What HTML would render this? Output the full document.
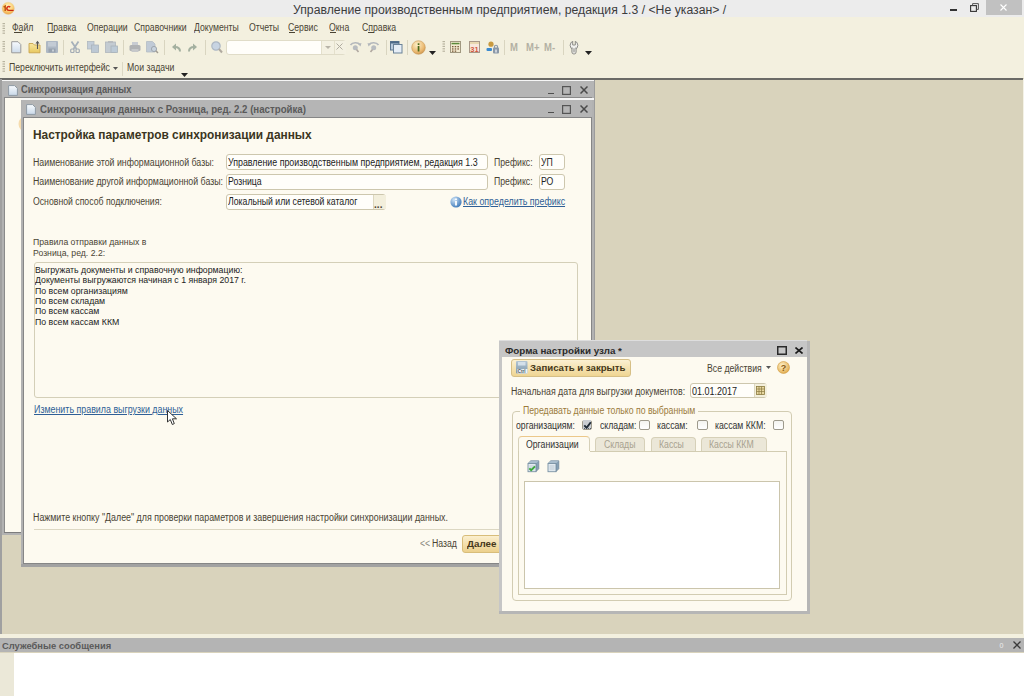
<!DOCTYPE html>
<html><head><meta charset="utf-8"><style>
html,body{margin:0;padding:0;width:1024px;height:696px;overflow:hidden;background:#d9d3bc}
body>div,body>svg{position:absolute}
.t{white-space:nowrap;line-height:1;font-family:"Liberation Sans",sans-serif;transform-origin:0 0}
</style></head><body>
<div style="left:0px;top:0px;width:1024px;height:696px;background:#d9d3bc"></div>
<div style="left:0px;top:0px;width:1024px;height:17px;background:#ececec"></div>
<div style="left:0px;top:17px;width:1024px;height:61px;background:#f3f0df"></div>
<div style="left:0px;top:78.4px;width:1022.5px;height:1.4px;background:#6a6a66"></div>
<div style="left:1022.5px;top:79px;width:1.5px;height:555px;background:#f4f2e6"></div>
<div class="t" style="left:292.6px;top:4px;font-size:12px;font-weight:normal;color:#3c3c3c;transform:scaleX(1.02);">Управление производственным предприятием, редакция 1.3 / &lt;Не указан&gt; /</div>
<svg style="left:0px;top:0px" width="18" height="17"><defs><radialGradient id="lg" cx="50%" cy="35%" r="65%"><stop offset="0" stop-color="#fff8c8"/><stop offset=".55" stop-color="#fbd27a"/><stop offset="1" stop-color="#eca048"/></radialGradient></defs><circle cx="8.2" cy="8.4" r="6.2" fill="url(#lg)" stroke="#e9d9a8" stroke-width=".5"/><path d="M3.6 7.2L5.2 6.2V11" fill="none" stroke="#c0580c" stroke-width="1.5"/><path d="M10.2 7.2A1.9 1.9 0 1 0 8.6 10.3" fill="none" stroke="#d8301a" stroke-width="1.6"/><path d="M8.2 10.4H13.6" stroke="#c82a10" stroke-width="1.2"/></svg>
<div style="left:950.3px;top:9.2px;width:6.6px;height:1.4px;background:#333"></div>
<svg style="left:970px;top:3px" width="9" height="9"><rect x="0.6" y="2.6" width="5.8" height="5.8" fill="none" stroke="#333" stroke-width="1.1"/><path d="M2.6 2.5V0.6H8.4V6.4H6.5" fill="none" stroke="#555" stroke-width="1"/></svg>
<div style="left:986px;top:0px;width:36px;height:15px;background:#c1c1c1"></div>
<svg style="left:1000.3px;top:4.3px" width="8" height="7"><path d="M0.5 0.5L6.5 6.5M6.5 0.5L0.5 6.5" stroke="#fff" stroke-width="1.1"/></svg>
<svg style="left:2px;top:23px" width="4" height="12"><rect x="0.5" y="0.0" width="2.5" height="1.2" fill="#b8b4a0"/><rect x="0.5" y="2.4" width="2.5" height="1.2" fill="#b8b4a0"/><rect x="0.5" y="4.8" width="2.5" height="1.2" fill="#b8b4a0"/><rect x="0.5" y="7.199999999999999" width="2.5" height="1.2" fill="#b8b4a0"/><rect x="0.5" y="9.6" width="2.5" height="1.2" fill="#b8b4a0"/></svg>
<svg style="left:2px;top:41px" width="4" height="12"><rect x="0.5" y="0.0" width="2.5" height="1.2" fill="#b8b4a0"/><rect x="0.5" y="2.4" width="2.5" height="1.2" fill="#b8b4a0"/><rect x="0.5" y="4.8" width="2.5" height="1.2" fill="#b8b4a0"/><rect x="0.5" y="7.199999999999999" width="2.5" height="1.2" fill="#b8b4a0"/><rect x="0.5" y="9.6" width="2.5" height="1.2" fill="#b8b4a0"/></svg>
<svg style="left:2px;top:61px" width="4" height="12"><rect x="0.5" y="0.0" width="2.5" height="1.2" fill="#b8b4a0"/><rect x="0.5" y="2.4" width="2.5" height="1.2" fill="#b8b4a0"/><rect x="0.5" y="4.8" width="2.5" height="1.2" fill="#b8b4a0"/><rect x="0.5" y="7.199999999999999" width="2.5" height="1.2" fill="#b8b4a0"/><rect x="0.5" y="9.6" width="2.5" height="1.2" fill="#b8b4a0"/></svg>
<svg style="left:442px;top:41px" width="4" height="12"><rect x="0.5" y="0.0" width="2.5" height="1.2" fill="#b8b4a0"/><rect x="0.5" y="2.4" width="2.5" height="1.2" fill="#b8b4a0"/><rect x="0.5" y="4.8" width="2.5" height="1.2" fill="#b8b4a0"/><rect x="0.5" y="7.199999999999999" width="2.5" height="1.2" fill="#b8b4a0"/><rect x="0.5" y="9.6" width="2.5" height="1.2" fill="#b8b4a0"/></svg>
<svg style="left:11px;top:41px" width="11" height="13"><defs><linearGradient id="nd" x1="0" y1="0" x2="0" y2="1"><stop offset="0" stop-color="#f7fafd"/><stop offset="1" stop-color="#cddbea"/></linearGradient></defs><path d="M.7 .7H7L9.8 3.5V11.8H.7Z" fill="url(#nd)" stroke="#9b9b9b" stroke-width="1"/></svg>
<svg style="left:28px;top:40px" width="13" height="14"><defs><linearGradient id="fo" x1="0" y1="0" x2="0" y2="1"><stop offset="0" stop-color="#f7e7a0"/><stop offset="1" stop-color="#e8c860"/></linearGradient></defs><path d="M1 3.5H5L6.5 5H12V12.8H1Z" fill="url(#fo)" stroke="#c9a54e" stroke-width=".9"/><path d="M9.5 9V2.5" stroke="#555" stroke-width="1.1"/><path d="M7.5 3.5L9.5 .8L11.5 3.5Z" fill="#555"/></svg>
<svg style="left:46px;top:41px" width="12" height="12"><rect x="0" y="0" width="12" height="12" rx="1" fill="#aeb8c4"/><rect x="2" y="1" width="8" height="4.5" fill="#c3cbd4"/><rect x="2.5" y="7.5" width="7" height="4" fill="#98a2ae"/><rect x="6" y="8.5" width="2" height="2" fill="#c8cfd6"/></svg>
<div style="left:63px;top:40px;width:1px;height:15px;background:#d9d5c0"></div>
<svg style="left:70px;top:41px" width="10" height="12"><path d="M1.5 .5L6.5 8M8.5 .5L3.5 8" stroke="#a6b0ba" stroke-width="1.8"/><rect x="0.7" y="8" width="3.3" height="3.5" rx="1" fill="none" stroke="#a3acb4" stroke-width="1.2"/><rect x="6" y="8" width="3.3" height="3.5" rx="1" fill="none" stroke="#a3acb4" stroke-width="1.2"/></svg>
<svg style="left:87px;top:41px" width="12" height="12"><rect x=".5" y=".5" width="6.5" height="7.5" fill="#c3cdd8" stroke="#b0b8c0" stroke-width=".8"/><rect x="4.5" y="4" width="7" height="7.5" fill="#bcc8d4" stroke="#aab3bc" stroke-width=".8"/></svg>
<svg style="left:105px;top:41px" width="13" height="12"><rect x=".5" y="1" width="10" height="10.5" fill="#c3cbd2" stroke="#b0b6bc" stroke-width=".8"/><rect x="3" y="0" width="5" height="2" fill="#b8bcc0"/><rect x="6" y="5" width="6.5" height="6.5" fill="#bccad6" stroke="#a8b2ba" stroke-width=".8"/></svg>
<div style="left:122.5px;top:40px;width:1px;height:15px;background:#d9d5c0"></div>
<svg style="left:129px;top:41px" width="12" height="12"><rect x="3" y="1" width="6" height="4" fill="#c8ccd2"/><rect x=".5" y="4" width="11" height="6" rx="1.5" fill="#b0b2b4"/><rect x="2.5" y="8" width="7" height="3" fill="#c6c8ca"/></svg>
<svg style="left:146px;top:41px" width="13" height="13"><path d="M.5 .5H6.5L9 3V11H.5Z" fill="#c0cad6" stroke="#b4bcc4" stroke-width=".8"/><circle cx="8" cy="8" r="2.6" fill="#c8d2dc" stroke="#9ea6ae" stroke-width="1"/><path d="M9.8 9.8L12 12" stroke="#a09a90" stroke-width="1.5"/></svg>
<div style="left:163.5px;top:40px;width:1px;height:15px;background:#d9d5c0"></div>
<svg style="left:172px;top:43px" width="9" height="9"><path d="M8 8.5C8 5 6 4 3 4" fill="none" stroke="#a4b0a0" stroke-width="2"/><path d="M0 4L4 .5V7.5Z" fill="#a4b0a0"/></svg>
<svg style="left:188px;top:43px" width="9" height="9"><path d="M1 8.5C1 5 3 4 6 4" fill="none" stroke="#a4b0a0" stroke-width="2"/><path d="M9 4L5 .5V7.5Z" fill="#a4b0a0"/></svg>
<div style="left:204.5px;top:40px;width:1px;height:15px;background:#d9d5c0"></div>
<svg style="left:211px;top:41px" width="12" height="13"><circle cx="5" cy="5" r="4.2" fill="#c8d4e2" stroke="#aeb8c4" stroke-width="1.2"/><path d="M8 8L11 11.5" stroke="#b0aaa0" stroke-width="2"/></svg>
<div style="left:226px;top:39.5px;width:119.5px;height:15px;background:#fffefa;border:1px solid #e0dcc8;border-radius:3px;box-sizing:border-box"></div>
<div style="left:321px;top:40.5px;width:24px;height:13px;background:#f4f1e2;border-left:1px solid #e4e0cc"></div>
<div style="left:333.5px;top:40.5px;width:1px;height:13px;background:#e4e0cc"></div>
<svg style="left:325px;top:46px" width="6" height="3"><path d="M0 0H6L3 3Z" fill="#b8b4a8"/></svg>
<svg style="left:336px;top:43px" width="7" height="7"><path d="M.5 .5L6.5 6.5M6.5 .5L.5 6.5" stroke="#b0aca0" stroke-width="1"/></svg>
<svg style="left:349px;top:41px" width="13" height="12"><g ><path d="M1.5 4C3.5 1 9 1 11 3.5" fill="none" stroke="#b4b8bc" stroke-width="1.6"/><path d="M12.5 2L11.5 5.5L9 3Z" fill="#b4b8bc"/><circle cx="6.3" cy="6.8" r="2.5" fill="#b8bcc0"/><path d="M7.5 8.5L9.5 11" stroke="#b0a8a0" stroke-width="1.6"/></g></svg>
<svg style="left:367px;top:41px" width="13" height="12"><g transform="translate(13,0) scale(-1,1)"><path d="M1.5 4C3.5 1 9 1 11 3.5" fill="none" stroke="#b4b8bc" stroke-width="1.6"/><path d="M12.5 2L11.5 5.5L9 3Z" fill="#b4b8bc"/><circle cx="6.3" cy="6.8" r="2.5" fill="#b8bcc0"/><path d="M7.5 8.5L9.5 11" stroke="#b0a8a0" stroke-width="1.6"/></g></svg>
<div style="left:385.5px;top:40px;width:1px;height:15px;background:#d9d5c0"></div>
<svg style="left:390px;top:41px" width="13" height="13"><rect x=".5" y=".5" width="8.5" height="8.5" fill="#b8cadc" stroke="#5c7690" stroke-width="1"/><rect x=".5" y=".5" width="8.5" height="2" fill="#4c6a88"/><rect x="3.5" y="3.5" width="8.5" height="8.5" fill="#e6eef6" stroke="#6a8298" stroke-width="1"/></svg>
<div style="left:406.5px;top:40px;width:1px;height:15px;background:#d9d5c0"></div>
<svg style="left:411px;top:40px" width="15" height="15"><defs><radialGradient id="inf" cx="40%" cy="30%" r="75%"><stop offset="0" stop-color="#fdf0c8"/><stop offset=".7" stop-color="#eab870"/><stop offset="1" stop-color="#c8904a"/></radialGradient></defs><circle cx="7.5" cy="7.5" r="6.8" fill="url(#inf)" stroke="#c99a58" stroke-width=".6"/><rect x="6.7" y="6" width="1.7" height="5.5" fill="#4a6a1a"/><rect x="6.7" y="3.3" width="1.7" height="1.7" fill="#4a6a1a"/></svg>
<svg style="left:429px;top:51px" width="7" height="4"><path d="M0 0H7L3.5 4Z" fill="#222"/></svg>
<svg style="left:450px;top:41px" width="11" height="12"><rect x=".5" y=".5" width="10" height="11" fill="#f2ead0" stroke="#a09880" stroke-width="1"/><rect x="1.5" y="1.8" width="8" height="1.5" fill="#5a8a3a"/><g fill="#7a5a3a"><rect x="2" y="5" width="1.5" height="1.3"/><rect x="4.7" y="5" width="1.5" height="1.3"/><rect x="7.4" y="5" width="1.5" height="1.3"/><rect x="2" y="7.3" width="1.5" height="1.3"/><rect x="4.7" y="7.3" width="1.5" height="1.3"/><rect x="7.4" y="7.3" width="1.5" height="1.3"/><rect x="2" y="9.5" width="1.5" height="1.3"/><rect x="4.7" y="9.5" width="1.5" height="1.3"/></g></svg>
<svg style="left:469px;top:41px" width="11" height="12"><rect x=".5" y=".5" width="10" height="11" fill="#f8e8dc" stroke="#a89888" stroke-width="1"/><rect x="1" y="1" width="9" height="2" fill="#e8d8b0"/><text x="1.3" y="10.5" font-size="7.5" font-family="Liberation Sans" font-weight="bold" fill="#d05a40">31</text></svg>
<svg style="left:486px;top:41px" width="14" height="13"><circle cx="5" cy="3.2" r="2.6" fill="#c89a40"/><rect x="0.5" y="7" width="5.5" height="3" rx="1" fill="#3a8ad0"/><rect x="7" y="6.5" width="6" height="6" rx="1" fill="#8a98a8"/><path d="M8.5 7V5.5C8.5 3.8 11.5 3.8 11.5 5.5V7" fill="none" stroke="#8a98a8" stroke-width="1.2"/><rect x="9.3" y="8.5" width="1.4" height="3" fill="#e8ecf0"/></svg>
<div style="left:503.5px;top:40px;width:1px;height:15px;background:#d9d5c0"></div>
<div class="t" style="left:509.9px;top:43px;font-size:10px;font-weight:bold;color:#b4b0a4;transform:scaleX(0.95);">M</div>
<div class="t" style="left:525.5px;top:43px;font-size:10px;font-weight:bold;color:#b4b0a4;transform:scaleX(0.95);">M+</div>
<div class="t" style="left:544.3px;top:43px;font-size:10px;font-weight:bold;color:#b4b0a4;transform:scaleX(0.95);">M-</div>
<div style="left:562.5px;top:40px;width:1px;height:15px;background:#d9d5c0"></div>
<svg style="left:569px;top:40.5px" width="10" height="14"><circle cx="5" cy="4.3" r="3.9" fill="#f2f2ef" stroke="#8c8c88" stroke-width="1"/><rect x="2.9" y="6" width="4.2" height="7" rx="2" fill="#f2f2ef" stroke="#8c8c88" stroke-width="1"/><rect x="3.4" y="5" width="3.2" height="2" fill="#f2f2ef"/><path d="M3.7 0V4H6.3V0" fill="#f3f0df" stroke="#8c8c88" stroke-width="1"/><rect x="4.3" y="7.6" width="1.4" height="3.6" rx=".7" fill="none" stroke="#9a9a96" stroke-width=".8"/></svg>
<svg style="left:585px;top:51px" width="7" height="4"><path d="M0 0H7L3.5 4Z" fill="#222"/></svg>
<div class="t" style="left:12.3px;top:22.5px;font-size:10px;font-weight:normal;color:#4a4434;transform:scaleX(0.87);">Файл</div>
<div class="t" style="left:47.1px;top:22.5px;font-size:10px;font-weight:normal;color:#4a4434;transform:scaleX(0.87);">Правка</div>
<div class="t" style="left:86.9px;top:22.5px;font-size:10px;font-weight:normal;color:#4a4434;transform:scaleX(0.87);">Операции</div>
<div class="t" style="left:133.8px;top:22.5px;font-size:10px;font-weight:normal;color:#4a4434;transform:scaleX(0.87);">Справочники</div>
<div class="t" style="left:194.2px;top:22.5px;font-size:10px;font-weight:normal;color:#4a4434;transform:scaleX(0.87);">Документы</div>
<div class="t" style="left:248.6px;top:22.5px;font-size:10px;font-weight:normal;color:#4a4434;transform:scaleX(0.87);">Отчеты</div>
<div class="t" style="left:287.5px;top:22.5px;font-size:10px;font-weight:normal;color:#4a4434;transform:scaleX(0.87);">Сервис</div>
<div class="t" style="left:329.1px;top:22.5px;font-size:10px;font-weight:normal;color:#4a4434;transform:scaleX(0.87);">Окна</div>
<div class="t" style="left:362.0px;top:22.5px;font-size:10px;font-weight:normal;color:#4a4434;transform:scaleX(0.87);">Справка</div>
<div style="left:13.5px;top:32px;width:8px;height:1px;background:#4a4434"></div>
<div style="left:48px;top:32px;width:6px;height:1px;background:#4a4434"></div>
<div style="left:288.5px;top:32px;width:6px;height:1px;background:#4a4434"></div>
<div style="left:330px;top:32px;width:6px;height:1px;background:#4a4434"></div>
<div style="left:367.5px;top:32px;width:6px;height:1px;background:#4a4434"></div>
<div class="t" style="left:8.9px;top:63px;font-size:10px;font-weight:normal;color:#4a4434;transform:scaleX(0.87);">Переключить интерфейс</div>
<svg style="left:113px;top:67px" width="6" height="3"><path d="M0 0H5L2.5 3Z" fill="#555"/></svg>
<div style="left:121.5px;top:62px;width:1px;height:14px;background:#dcd8c4"></div>
<div class="t" style="left:127.1px;top:63px;font-size:10px;font-weight:normal;color:#4a4434;transform:scaleX(0.87);">Мои задачи</div>
<svg style="left:181px;top:73px" width="7" height="4"><path d="M0 0H7L3.5 4Z" fill="#222"/></svg>
<div style="left:0px;top:79.8px;width:595.3px;height:455px;background:#b2b2b2"></div>
<div style="left:594px;top:79.8px;width:1.3px;height:455px;background:#9c9c9c"></div>
<div style="left:1.6px;top:80px;width:592.5px;height:1px;background:#f6f6f6"></div>
<div style="left:1.6px;top:81px;width:592.5px;height:16.2px;background:#b5b5b5"></div>
<div style="left:3.8px;top:97.2px;width:588px;height:1px;background:#8a8a8a"></div>
<div style="left:3.8px;top:97.2px;width:1px;height:435px;background:#8a8a8a"></div>
<div style="left:3.8px;top:531.6px;width:588px;height:1px;background:#7c7c7c"></div>
<div style="left:4.6px;top:98.2px;width:587px;height:433.4px;background:#fdfaf0"></div>
<div class="t" style="left:20.6px;top:85.4px;font-size:10px;font-weight:bold;color:#5a5a5a;transform:scaleX(0.93);">Синхронизация данных</div>
<svg style="left:14.5px;top:115px" width="8" height="18"><circle cx="12" cy="9" r="8.5" fill="#f6dcae"/></svg>
<div style="left:21px;top:98.3px;width:574.3px;height:468.5px;background:#b2b2b2"></div>
<div style="left:594px;top:98.3px;width:1.3px;height:468.5px;background:#9c9c9c"></div>
<div style="left:21px;top:563.5px;width:574.3px;height:3.3px;background:#a2a2a2"></div>
<div style="left:21px;top:98.3px;width:573px;height:1.5px;background:#f6f6f6"></div>
<div style="left:22px;top:99.8px;width:570px;height:16.8px;background:#b5b5b5"></div>
<div style="left:22.5px;top:116.6px;width:569.5px;height:447px;background:#868686"></div>
<div style="left:23.5px;top:117.5px;width:567.8px;height:445.2px;background:#fdfaf0"></div>
<div class="t" style="left:40.0px;top:104.8px;font-size:10px;font-weight:bold;color:#5a5a5a;transform:scaleX(0.968);">Синхронизация данных с Розница, ред. 2.2 (настройка)</div>
<svg style="left:7.5px;top:84.5px" width="10" height="11"><defs><linearGradient id="dg7.5" x1="0" y1="0" x2="0" y2="1"><stop offset="0" stop-color="#f8fbfe"/><stop offset="1" stop-color="#c9d8e8"/></linearGradient></defs><path d="M.6 .6H6.6L9.4 3.4V10.4H.6Z" fill="url(#dg7.5)" stroke="#8f9aa4" stroke-width="1"/></svg>
<svg style="left:26px;top:104px" width="10" height="11"><defs><linearGradient id="dg26" x1="0" y1="0" x2="0" y2="1"><stop offset="0" stop-color="#f8fbfe"/><stop offset="1" stop-color="#c9d8e8"/></linearGradient></defs><path d="M.6 .6H6.6L9.4 3.4V10.4H.6Z" fill="url(#dg26)" stroke="#8f9aa4" stroke-width="1"/></svg>
<div style="left:548.2px;top:92.6px;width:6px;height:1.7px;background:#4e4e4e"></div>
<svg style="left:562px;top:86px" width="9" height="9"><rect x=".6" y=".6" width="7.8" height="7.8" fill="none" stroke="#555" stroke-width="1.2"/></svg>
<svg style="left:579.8px;top:86.4px" width="8" height="8"><path d="M.5 .5L7.5 7.5M7.5 .5L.5 7.5" stroke="#4a4a4a" stroke-width="1.5"/></svg>
<div style="left:548.2px;top:111.6px;width:6px;height:1.7px;background:#4e4e4e"></div>
<svg style="left:562px;top:105px" width="9" height="9"><rect x=".6" y=".6" width="7.8" height="7.8" fill="none" stroke="#555" stroke-width="1.2"/></svg>
<svg style="left:579.8px;top:105.4px" width="8" height="8"><path d="M.5 .5L7.5 7.5M7.5 .5L.5 7.5" stroke="#4a4a4a" stroke-width="1.5"/></svg>
<div class="t" style="left:33.1px;top:128.5px;font-size:12px;font-weight:bold;color:#3b3522;transform:scaleX(0.99);">Настройка параметров синхронизации данных</div>
<div class="t" style="left:33.1px;top:157.6px;font-size:10px;font-weight:normal;color:#4a4434;transform:scaleX(0.88);">Наименование этой информационной базы:</div>
<div class="t" style="left:33.1px;top:177.4px;font-size:10px;font-weight:normal;color:#4a4434;transform:scaleX(0.88);">Наименование другой информационной базы:</div>
<div class="t" style="left:33.1px;top:197.3px;font-size:10px;font-weight:normal;color:#4a4434;transform:scaleX(0.87);">Основной способ подключения:</div>
<div style="left:225.5px;top:154px;width:262px;height:16px;background:#fffefa;border:1px solid #cdc7ae;border-radius:3px;box-sizing:border-box"></div>
<div style="left:225.5px;top:174px;width:262px;height:16px;background:#fffefa;border:1px solid #cdc7ae;border-radius:3px;box-sizing:border-box"></div>
<div style="left:225.5px;top:194px;width:160px;height:16px;background:#fffefa;border:1px solid #cdc7ae;border-radius:3px;box-sizing:border-box"></div>
<div class="t" style="left:227.6px;top:157.6px;font-size:10px;font-weight:normal;color:#222;transform:scaleX(0.885);">Управление производственным предприятием, редакция 1.3</div>
<div class="t" style="left:227.6px;top:177.4px;font-size:10px;font-weight:normal;color:#222;transform:scaleX(0.87);">Розница</div>
<div class="t" style="left:227.6px;top:197.3px;font-size:10px;font-weight:normal;color:#222;transform:scaleX(0.87);">Локальный или сетевой каталог</div>
<div style="left:372.5px;top:195px;width:12px;height:14px;background:#f3efdc;border-left:1px solid #ddd8c0"></div>
<div class="t" style="left:374.1px;top:200px;font-size:10px;font-weight:bold;color:#4a4434;transform:scaleX(1);">...</div>
<div class="t" style="left:493.5px;top:157.6px;font-size:10px;font-weight:normal;color:#4a4434;transform:scaleX(0.87);">Префикс:</div>
<div class="t" style="left:493.5px;top:177.4px;font-size:10px;font-weight:normal;color:#4a4434;transform:scaleX(0.87);">Префикс:</div>
<div style="left:539px;top:154px;width:26px;height:16px;background:#fffefa;border:1px solid #cdc7ae;border-radius:3px;box-sizing:border-box"></div>
<div style="left:539px;top:174px;width:26px;height:16px;background:#fffefa;border:1px solid #cdc7ae;border-radius:3px;box-sizing:border-box"></div>
<div class="t" style="left:540.6px;top:157.6px;font-size:10px;font-weight:normal;color:#222;transform:scaleX(0.87);">УП</div>
<div class="t" style="left:540.6px;top:177.4px;font-size:10px;font-weight:normal;color:#222;transform:scaleX(0.87);">РО</div>
<svg style="left:450px;top:196px" width="12" height="12"><defs><radialGradient id="ig" cx="35%" cy="30%" r="75%"><stop offset="0" stop-color="#cfe4f7"/><stop offset="1" stop-color="#3b77b8"/></radialGradient></defs><circle cx="6" cy="6" r="5.6" fill="url(#ig)"/><rect x="5.1" y="5" width="1.8" height="4.5" fill="#fff"/><rect x="5.1" y="2.5" width="1.8" height="1.6" fill="#fff"/></svg>
<div class="t" style="left:462.6px;top:197.3px;font-size:10px;font-weight:normal;color:#2f5f96;transform:scaleX(0.885);text-decoration:underline">Как определить префикс</div>
<div class="t" style="left:32.9px;top:238.0px;font-size:8.5px;font-weight:normal;color:#4a4434;transform:scaleX(1.02);">Правила отправки данных в</div>
<div class="t" style="left:32.9px;top:248.5px;font-size:8.5px;font-weight:normal;color:#4a4434;transform:scaleX(1.02);">Розница, ред. 2.2:</div>
<div style="left:34px;top:261.5px;width:543.5px;height:136.5px;background:#fdfaf0;border:1px solid #d4cfb8;border-radius:3px;box-sizing:border-box"></div>
<div class="t" style="left:35.4px;top:265.79999999999995px;font-size:8.5px;font-weight:normal;color:#222;transform:scaleX(1.03);">Выгружать документы и справочную информацию:</div>
<div class="t" style="left:35.4px;top:276.15px;font-size:8.5px;font-weight:normal;color:#222;transform:scaleX(1.03);">Документы выгружаются начиная с 1 января 2017 г.</div>
<div class="t" style="left:35.4px;top:286.49999999999994px;font-size:8.5px;font-weight:normal;color:#222;transform:scaleX(1.03);">По всем организациям</div>
<div class="t" style="left:35.4px;top:296.84999999999997px;font-size:8.5px;font-weight:normal;color:#222;transform:scaleX(1.03);">По всем складам</div>
<div class="t" style="left:35.4px;top:307.19999999999993px;font-size:8.5px;font-weight:normal;color:#222;transform:scaleX(1.03);">По всем кассам</div>
<div class="t" style="left:35.4px;top:317.54999999999995px;font-size:8.5px;font-weight:normal;color:#222;transform:scaleX(1.03);">По всем кассам ККМ</div>
<div class="t" style="left:33.6px;top:405.4px;font-size:10px;font-weight:normal;color:#2f5f96;transform:scaleX(0.887);text-decoration:underline">Изменить правила выгрузки данных</div>
<svg style="left:167px;top:410px" width="12" height="16"><path d="M0.5 0.5V12L3.3 9.5L5.3 14.5L7.3 13.6L5.4 8.8H9.5Z" fill="#fff" stroke="#333" stroke-width="1"/></svg>
<div class="t" style="left:33.1px;top:512.8px;font-size:10px;font-weight:normal;color:#4a4434;transform:scaleX(0.885);">Нажмите кнопку "Далее" для проверки параметров и завершения настройки синхронизации данных.</div>
<div style="left:34px;top:529px;width:557px;height:1px;background:#dcd7c2"></div>
<div class="t" style="left:419.6px;top:539.4px;font-size:10px;font-weight:normal;color:#8a867a;transform:scaleX(0.87);">&lt;&lt;</div>
<div class="t" style="left:431.6px;top:539.4px;font-size:10px;font-weight:normal;color:#4a4434;transform:scaleX(0.87);">Назад</div>
<div style="left:462px;top:535px;width:60px;height:17.5px;background:linear-gradient(#fbefcf,#ecd08c);border:1px solid #d8bd7a;border-radius:3px;box-sizing:border-box"></div>
<div class="t" style="left:466.8px;top:539.2px;font-size:9.5px;font-weight:bold;color:#45381a;transform:scaleX(1.03);">Далее</div>
<div style="left:499px;top:340.5px;width:310.5px;height:273.5px;background:#b6b6b6"></div>
<div style="left:498.8px;top:340.3px;width:308px;height:271px;background:#c6c6c6"></div>
<div style="left:498.8px;top:340.3px;width:308px;height:1px;background:#dedede"></div>
<div style="left:501.5px;top:357.3px;width:305px;height:253.7px;background:#fdfaf0"></div>
<div class="t" style="left:504.6px;top:346.4px;font-size:9.5px;font-weight:bold;color:#2a2a2a;transform:scaleX(1.03);">Форма настройки узла *</div>
<svg style="left:777px;top:346px" width="10" height="9"><rect x="0.75" y="0.75" width="8.5" height="7.5" fill="none" stroke="#2a2a2a" stroke-width="1.5"/></svg>
<svg style="left:794.5px;top:347px" width="8" height="7"><path d="M0.5 0.5L7.5 6.5M7.5 0.5L0.5 6.5" stroke="#1a1a1a" stroke-width="1.6"/></svg>
<div style="left:511.2px;top:359px;width:120.3px;height:17.5px;background:linear-gradient(#fbf0d2,#efd592);border:1px solid #d6bf86;border-radius:3px;box-sizing:border-box"></div>
<svg style="left:516px;top:361px" width="12" height="13"><defs><linearGradient id="fl" x1="0" y1="0" x2="0" y2="1"><stop offset="0" stop-color="#b4c6d4"/><stop offset="1" stop-color="#7f98ac"/></linearGradient></defs><rect x="0" y="0" width="11.5" height="12.5" rx="1" fill="url(#fl)"/><rect x="2" y="1" width="7.5" height="3.5" fill="#d4e0ea"/><rect x="1.5" y="8" width="10" height="4.5" fill="#eef2f4"/><text x="1.8" y="12.2" font-size="4.5" font-family="Liberation Sans" font-weight="bold" fill="#4a5a66">Ctrl</text></svg>
<div class="t" style="left:530.1px;top:364.2px;font-size:9px;font-weight:bold;color:#45381a;transform:scaleX(1.07);">Записать и закрыть</div>
<div class="t" style="left:707.0px;top:364px;font-size:10px;font-weight:normal;color:#4a4434;transform:scaleX(0.87);">Все действия</div>
<svg style="left:766px;top:366px" width="5" height="3"><path d="M0 0H5L2.5 3Z" fill="#555"/></svg>
<svg style="left:777px;top:361px" width="13" height="13"><defs><radialGradient id="hg" cx="40%" cy="35%" r="70%"><stop offset="0" stop-color="#fff3cc"/><stop offset="1" stop-color="#e0a848"/></radialGradient></defs><circle cx="6.5" cy="6.5" r="6" fill="url(#hg)" stroke="#d09a40" stroke-width=".6"/><text x="3.8" y="10" font-size="9" font-weight="bold" font-family="Liberation Sans" fill="#8a5a10">?</text></svg>
<div class="t" style="left:510.6px;top:386.9px;font-size:10px;font-weight:normal;color:#4a4434;transform:scaleX(0.878);">Начальная дата для выгрузки документов:</div>
<div style="left:690px;top:383px;width:77px;height:15px;background:#fffefa;border:1px solid #cdc7ae;border-radius:3px;box-sizing:border-box"></div>
<div class="t" style="left:691.6px;top:386.5px;font-size:10px;font-weight:normal;color:#222;transform:scaleX(0.9);">01.01.2017</div>
<div style="left:754px;top:384px;width:12px;height:13px;background:#f3efdc;border-left:1px solid #ddd8c0"></div>
<svg style="left:756px;top:386px" width="9" height="9"><rect x=".5" y=".5" width="8" height="8" fill="#e8d7a0" stroke="#8a7a40" stroke-width=".8"/><path d="M.5 3H8.5M.5 5.5H8.5M3 .5V8.5M5.5 .5V8.5" stroke="#8a7a40" stroke-width=".7"/></svg>
<div style="left:511.5px;top:411px;width:280px;height:189.5px;border:1px solid #d2ccb2;border-radius:4px;box-sizing:border-box"></div>
<div style="left:520px;top:405px;width:178px;height:10px;background:#fdfaf0"></div>
<div class="t" style="left:522.5px;top:406px;font-size:10px;font-weight:normal;color:#9b7a3c;transform:scaleX(0.87);">Передавать данные только по выбранным</div>
<div class="t" style="left:516.3px;top:420.5px;font-size:10px;font-weight:normal;color:#333;transform:scaleX(0.87);">организациям:</div>
<div class="t" style="left:599.9px;top:420.5px;font-size:10px;font-weight:normal;color:#333;transform:scaleX(0.87);">складам:</div>
<div class="t" style="left:656.9px;top:420.5px;font-size:10px;font-weight:normal;color:#333;transform:scaleX(0.87);">кассам:</div>
<div class="t" style="left:714.7px;top:420.5px;font-size:10px;font-weight:normal;color:#333;transform:scaleX(0.87);">кассам ККМ:</div>
<div style="left:581.6px;top:419.5px;width:10.5px;height:10.5px;background:linear-gradient(#f4f4f0,#fff);border:1px solid #9e9a8c;border-radius:2px;box-sizing:border-box"></div>
<div style="left:639px;top:419.5px;width:10.5px;height:10.5px;background:linear-gradient(#f4f4f0,#fff);border:1px solid #9e9a8c;border-radius:2px;box-sizing:border-box"></div>
<div style="left:697px;top:419.5px;width:10.5px;height:10.5px;background:linear-gradient(#f4f4f0,#fff);border:1px solid #9e9a8c;border-radius:2px;box-sizing:border-box"></div>
<div style="left:773.4px;top:419.5px;width:10.5px;height:10.5px;background:linear-gradient(#f4f4f0,#fff);border:1px solid #9e9a8c;border-radius:2px;box-sizing:border-box"></div>
<div style="left:582.6px;top:420.4px;width:8.5px;height:8.5px;background:#c9cdd2"></div>
<svg style="left:582.5px;top:420.5px" width="9" height="9"><path d="M1.3 4.3L3.6 6.8L7.8 1.2" fill="none" stroke="#1e2a36" stroke-width="1.9"/><path d="M1 7.5H8" stroke="#3a4450" stroke-width=".8" stroke-dasharray="1 1"/></svg>
<div style="left:595.3px;top:437px;width:50px;height:13.5px;background:#ebe7d8;border:1px solid #d6d0b8;border-bottom:none;border-radius:4px 4px 0 0;box-sizing:border-box"></div>
<div style="left:651px;top:437px;width:44.6px;height:13.5px;background:#ebe7d8;border:1px solid #d6d0b8;border-bottom:none;border-radius:4px 4px 0 0;box-sizing:border-box"></div>
<div style="left:701.3px;top:437px;width:65.6px;height:13.5px;background:#ebe7d8;border:1px solid #d6d0b8;border-bottom:none;border-radius:4px 4px 0 0;box-sizing:border-box"></div>
<div style="left:517.7px;top:436.3px;width:72px;height:15px;background:#fdfaf0;border:1px solid #d6d0b8;border-top:1.5px solid #ecc88a;border-bottom:none;border-radius:4px 4px 0 0;box-sizing:border-box"></div>
<div style="left:589.7px;top:450.5px;width:197px;height:1px;background:#d2ccb2"></div>
<div style="left:517.7px;top:450.5px;width:269px;height:144px;border:1px solid #d2ccb2;border-top:none;box-sizing:border-box"></div>
<div class="t" style="left:526.1px;top:440px;font-size:10px;font-weight:normal;color:#333;transform:scaleX(0.87);">Организации</div>
<div class="t" style="left:604.1px;top:440px;font-size:10px;font-weight:normal;color:#a8a290;transform:scaleX(0.87);">Склады</div>
<div class="t" style="left:659.1px;top:440px;font-size:10px;font-weight:normal;color:#a8a290;transform:scaleX(0.87);">Кассы</div>
<div class="t" style="left:709.1px;top:440px;font-size:10px;font-weight:normal;color:#a8a290;transform:scaleX(0.87);">Кассы ККМ</div>
<svg style="left:527px;top:460px" width="13" height="13"><path d="M1 3.5L3.8 .8H11.8V8.8L9 11.6V3.5Z" fill="#86a0b6" stroke="#6a8296" stroke-width=".7"/><path d="M1 3.5L3.8 .8H11.8L9 3.5Z" fill="#a8bccc"/><rect x="1" y="3.5" width="8" height="8.2" fill="#e2eaf0" stroke="#7a92a4" stroke-width=".9"/><rect x="2.5" y="5" width="5" height="5.2" fill="#d0dae2"/><path d="M2.3 8.3L4.2 10.2L8 6.3" fill="none" stroke="#3aa83a" stroke-width="1.9"/></svg>
<svg style="left:547px;top:460px" width="13" height="13"><path d="M1 3.5L3.8 .8H11.8V8.8L9 11.6V3.5Z" fill="#86a0b6" stroke="#6a8296" stroke-width=".7"/><path d="M1 3.5L3.8 .8H11.8L9 3.5Z" fill="#a8bccc"/><rect x="1" y="3.5" width="8" height="8.2" fill="#e2eaf0" stroke="#7a92a4" stroke-width=".9"/><rect x="2.5" y="5" width="5" height="5.2" fill="#d0dae2"/></svg>
<div style="left:524px;top:481px;width:256px;height:107.5px;background:#fff;border:1px solid #cbc5ac;box-sizing:border-box"></div>
<div style="left:0px;top:79px;width:1.5px;height:555px;background:#a0a0a0"></div>
<div style="left:0px;top:633.5px;width:1024px;height:5px;background:#f3f0df"></div>
<div style="left:0px;top:638.2px;width:1024px;height:14.3px;background:#b4b4b4"></div>
<div class="t" style="left:2.1px;top:642px;font-size:9px;font-weight:bold;color:#5a5a5a;transform:scaleX(1.04);">Служебные сообщения</div>
<div class="t" style="left:999.6px;top:642px;font-size:7px;font-weight:normal;color:#ececec;transform:scaleX(1);">0</div>
<svg style="left:1012.5px;top:641.3px" width="8" height="8"><path d="M0.5 0.5L7.5 7.5M7.5 0.5L0.5 7.5" stroke="#3a3a3a" stroke-width="1.3"/></svg>
<div style="left:0px;top:652.5px;width:1024px;height:44px;background:#fff"></div>
<div style="left:0px;top:652.5px;width:14px;height:44px;background:#ebe8d8"></div>
</body></html>
